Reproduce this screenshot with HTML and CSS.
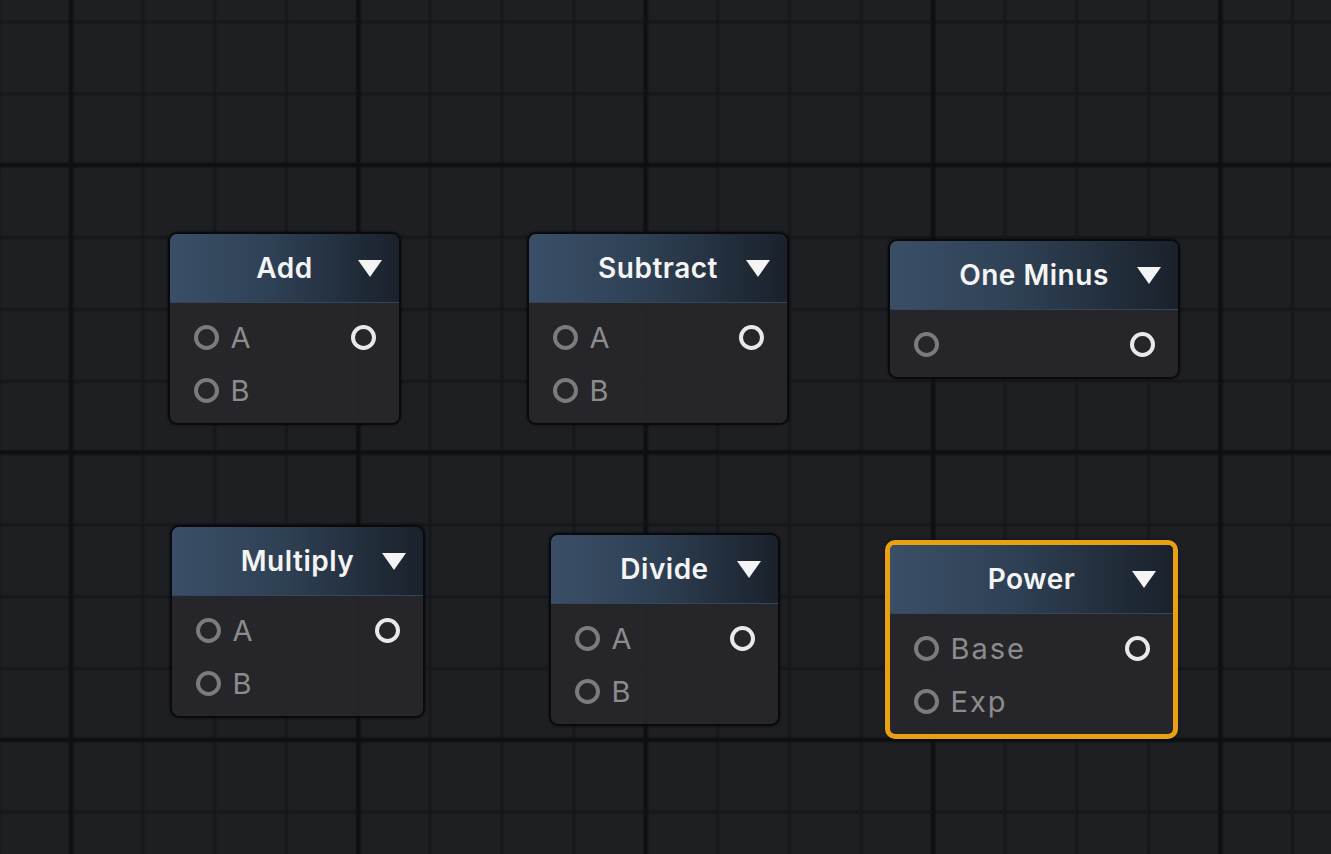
FILE: index.html
```html
<!DOCTYPE html>
<html lang="en">
<head>
<meta charset="utf-8">
<title>Math nodes</title>
<link rel="stylesheet" href="styles.css">
</head>
<body>
<main class="canvas">
  <section class="node n-add">
    <header class="node-head"><span class="node-title">Add</span><span class="caret"></span></header>
    <div class="node-body">
      <div class="port-row"><span class="port in"></span><span class="label">A</span><span class="port out"></span></div>
      <div class="port-row"><span class="port in"></span><span class="label">B</span></div>
    </div>
  </section>

  <section class="node n-sub">
    <header class="node-head"><span class="node-title">Subtract</span><span class="caret"></span></header>
    <div class="node-body">
      <div class="port-row"><span class="port in"></span><span class="label">A</span><span class="port out"></span></div>
      <div class="port-row"><span class="port in"></span><span class="label">B</span></div>
    </div>
  </section>

  <section class="node n-one">
    <header class="node-head"><span class="node-title">One Minus</span><span class="caret"></span></header>
    <div class="node-body">
      <div class="port-row"><span class="port in"></span><span class="label"></span><span class="port out"></span></div>
    </div>
  </section>

  <section class="node n-mul">
    <header class="node-head"><span class="node-title">Multiply</span><span class="caret"></span></header>
    <div class="node-body">
      <div class="port-row"><span class="port in"></span><span class="label">A</span><span class="port out"></span></div>
      <div class="port-row"><span class="port in"></span><span class="label">B</span></div>
    </div>
  </section>

  <section class="node n-div">
    <header class="node-head"><span class="node-title">Divide</span><span class="caret"></span></header>
    <div class="node-body">
      <div class="port-row"><span class="port in"></span><span class="label">A</span><span class="port out"></span></div>
      <div class="port-row"><span class="port in"></span><span class="label">B</span></div>
    </div>
  </section>

  <section class="node n-pow selected">
    <header class="node-head"><span class="node-title">Power</span><span class="caret"></span></header>
    <div class="node-body">
      <div class="port-row"><span class="port in"></span><span class="label">Base</span><span class="port out"></span></div>
      <div class="port-row"><span class="port in"></span><span class="label">Exp</span></div>
    </div>
  </section>
</main>
</body>
</html>
```

FILE: styles.css
```css
* { box-sizing: border-box; }

html, body {
  margin: 0;
  padding: 0;
  width: 1331px;
  height: 854px;
  overflow: hidden;
  background: #1e1f23;
  font-family: Inter, "Noto Sans", "Liberation Sans", sans-serif;
}

.canvas {
  position: relative;
  width: 1331px;
  height: 854px;
  background-color: #1e1f23;
  background-image:
    linear-gradient(90deg, transparent 0, #0e0f11 2.5px, #0e0f11 4px, transparent 7px, transparent 100%),
    linear-gradient(180deg, transparent 0, #0e0f11 2.5px, #0e0f11 4px, transparent 7px, transparent 100%),
    linear-gradient(90deg, transparent 0, #16171a 2px, #16171a 3px, transparent 5px, transparent 100%),
    linear-gradient(180deg, transparent 0, #16171a 2px, #16171a 3px, transparent 5px, transparent 100%);
  background-size:
    287.4px 100%,
    100% 287.4px,
    71.85px 100%,
    100% 71.85px;
  background-position:
    67.6px 0,
    0 161.6px,
    68.5px 0,
    0 19.5px;
  background-repeat: repeat;
}

.node {
  position: absolute;
  display: flex;
  flex-direction: column;
  border: 2px solid #0a0a0c;
  border-radius: 9px;
  background: rgba(38, 39, 43, 0.96);
  overflow: hidden;
  box-shadow: 0 0 3px rgba(0, 0, 0, 0.6);
}

.n-add { left: 168px; top: 232px; width: 233px; }
.n-sub { left: 527px; top: 232px; width: 262px; }
.n-one { left: 888px; top: 239px; width: 292px; }
.n-mul { left: 170px; top: 525px; width: 255px; }
.n-div { left: 549px; top: 533px; width: 231px; }
.n-pow { left: 885px; top: 540px; width: 293px; }

.node.selected {
  border: 5px solid #e9a011;
  border-radius: 10px;
}

.node-head {
  position: relative;
  height: 69px;
  display: flex;
  align-items: center;
  justify-content: center;
  background: linear-gradient(90deg, #3a4f67 0%, #2e4054 45%, #1a212b 100%);
  border-bottom: 1px solid #34465a;
}

.node-title {
  color: #f4f4f4;
  font-size: 28px;
  font-weight: 600;
  letter-spacing: 0.5px;
  line-height: 1;
}

.caret {
  position: absolute;
  right: 17px;
  top: 50%;
  margin-top: -8px;
  width: 0;
  height: 0;
  border-left: 12px solid transparent;
  border-right: 12px solid transparent;
  border-top: 17px solid #f4f4f4;
}

.node-body {
  padding: 8px 24px 6px 24px;
  display: flex;
  flex-direction: column;
}

.port-row {
  height: 53px;
  display: flex;
  align-items: center;
}

.port {
  width: 25px;
  height: 25px;
  border-radius: 50%;
  flex: 0 0 auto;
}

.port.in { border: 4px solid #7b7b7d; margin-left: -0.5px; }
.port.out { border: 4.5px solid #e9e9ea; margin-left: auto; margin-right: -0.5px; }

.label {
  margin-left: 12px;
  color: #8c8c8e;
  font-size: 29px;
  font-weight: 400;
  letter-spacing: 2px;
  line-height: 1;
}
```
